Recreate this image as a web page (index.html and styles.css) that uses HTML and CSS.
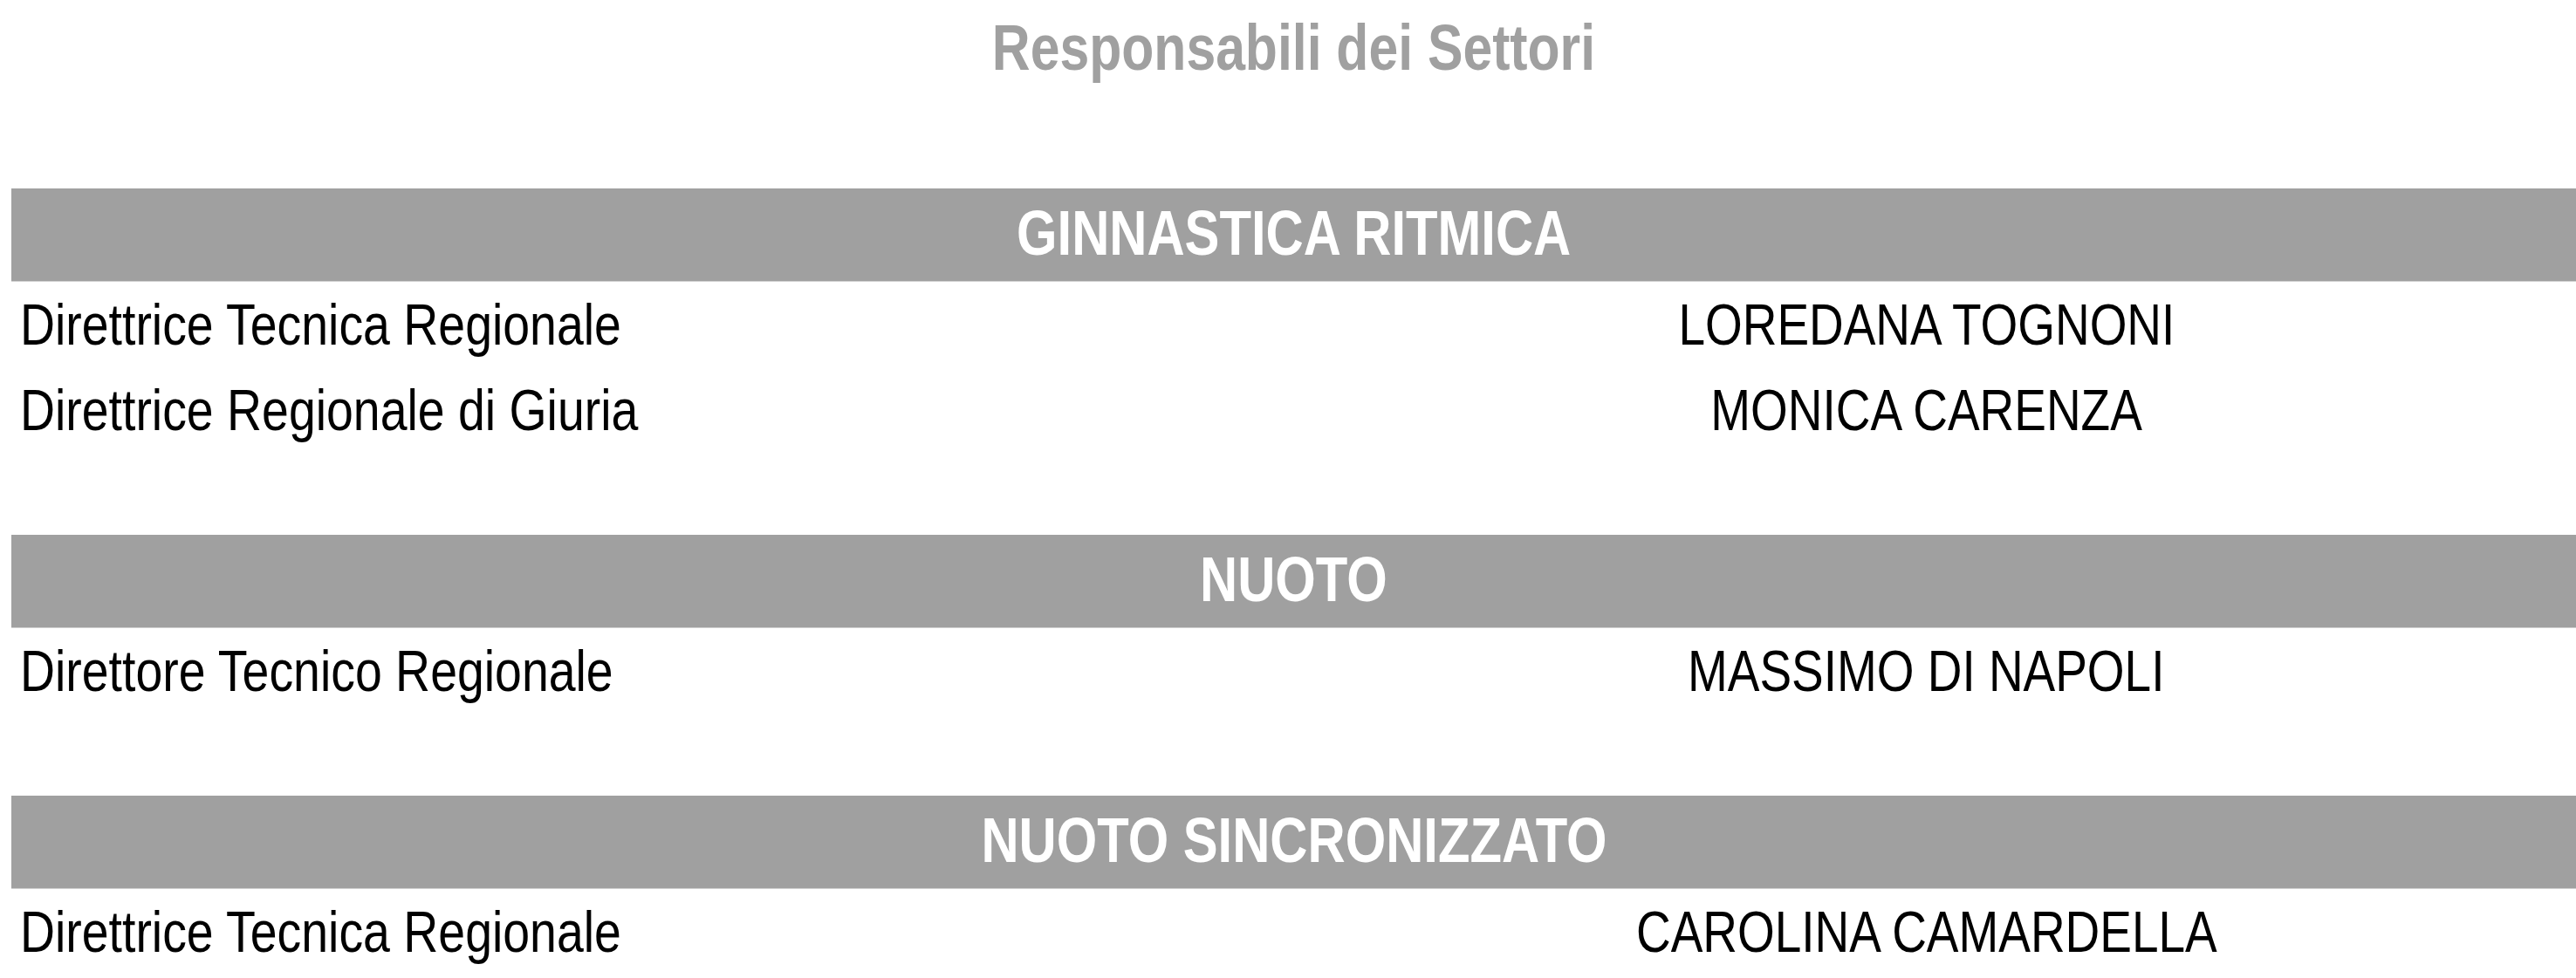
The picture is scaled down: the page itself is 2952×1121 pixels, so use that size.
FILE: index.html
```html
<!DOCTYPE html>
<html lang="it">
<head>
<meta charset="utf-8">
<title>Responsabili dei Settori</title>
<link rel="stylesheet" href="styles.css">
</head>
<body>
<div class="page">
  <h1 class="title"><span class="narrow">Responsabili dei Settori</span></h1>

  <section class="sector">
    <h2 class="sector-head"><span class="narrow">GINNASTICA RITMICA</span></h2>
    <div class="row"><span class="role"><span class="narrow">Direttrice Tecnica Regionale</span></span><span class="name"><span class="narrow">LOREDANA TOGNONI</span></span></div>
    <div class="row"><span class="role"><span class="narrow">Direttrice Regionale di Giuria</span></span><span class="name"><span class="narrow">MONICA CARENZA</span></span></div>
  </section>

  <section class="sector">
    <h2 class="sector-head"><span class="narrow">NUOTO</span></h2>
    <div class="row"><span class="role"><span class="narrow">Direttore Tecnico Regionale</span></span><span class="name"><span class="narrow">MASSIMO DI NAPOLI</span></span></div>
  </section>

  <section class="sector">
    <h2 class="sector-head"><span class="narrow">NUOTO SINCRONIZZATO</span></h2>
    <div class="row"><span class="role"><span class="narrow">Direttrice Tecnica Regionale</span></span><span class="name"><span class="narrow">CAROLINA CAMARDELLA</span></span></div>
  </section>
</div>
</body>
</html>
```

FILE: styles.css
```css
html, body {
  margin: 0;
  padding: 0;
  background: #ffffff;
}

body {
  overflow-x: hidden;
}

.page {
  margin-left: 13px;
  width: 2939px;
  font-family: "Liberation Sans Narrow", "Arial Narrow", "Liberation Sans", Arial, sans-serif;
  color: #000000;
}

/* Arial Narrow is not installed: condense Liberation Sans horizontally */
.narrow {
  display: inline-block;
  transform: scaleX(0.82);
  transform-origin: center center;
  white-space: nowrap;
}

.title {
  margin: 0 0 111px;
  padding-top: 5px;
  font-size: 74px;
  font-weight: bold;
  line-height: 100px;
  color: #a0a0a0;
  text-align: center;
}

.sector {
  margin-bottom: 94px;
}

.sector:last-child {
  margin-bottom: 0;
}

.sector-head {
  margin: 0;
  padding-bottom: 4px;
  font-size: 72px;
  font-weight: bold;
  line-height: 102px;
  color: #ffffff;
  background: #a0a0a0;
  border-bottom: 1px solid #d0d0d0;
  text-align: center;
}

.sector-head .narrow {
  transform: scaleX(0.83);
}

.row {
  display: grid;
  grid-template-columns: 1450px 1fr;
  font-size: 67px;
  line-height: 98px;
}

.role {
  padding-left: 10px;
}

.role .narrow {
  transform: scaleX(0.827);
  transform-origin: left center;
}

.name {
  text-align: center;
}
```
